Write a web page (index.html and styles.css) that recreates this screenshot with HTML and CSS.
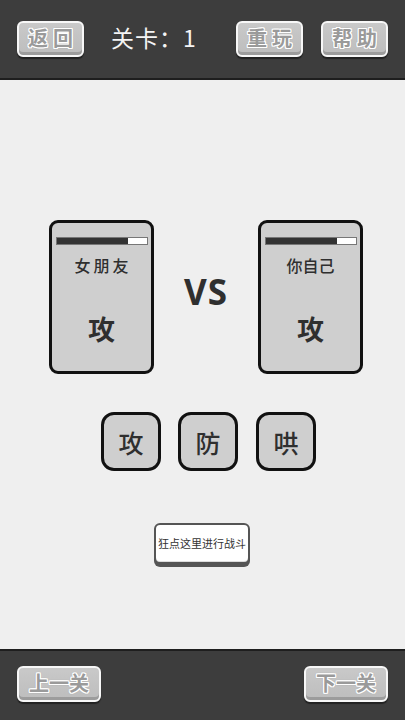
FILE: index.html
```html
<!DOCTYPE html>
<html lang="zh">
<head>
<meta charset="utf-8">
<title>关卡</title>
<link rel="stylesheet" href="styles.css">
</head>
<body>
<div class="screen">
  <header class="topbar">
    <button class="chip chip-sm">返回</button>
    <div class="level">关卡：1</div>
    <button class="chip chip-sm push">重玩</button>
    <button class="chip chip-sm">帮助</button>
  </header>

  <main class="arena">
    <div class="duel">
      <div class="card">
        <div class="hp"><div class="hp-fill" style="width:79%"></div></div>
        <div class="name spaced">女朋友</div>
        <div class="move">攻</div>
      </div>
      <div class="vs">VS</div>
      <div class="card">
        <div class="hp"><div class="hp-fill" style="width:79%"></div></div>
        <div class="name">你自己</div>
        <div class="move">攻</div>
      </div>
    </div>

    <div class="actions">
      <button class="act">攻</button>
      <button class="act">防</button>
      <button class="act">哄</button>
    </div>

    <div class="fight-wrap">
      <button class="fight">狂点这里进行战斗</button>
    </div>
  </main>

  <footer class="bottombar">
    <button class="chip chip-lg">上一关</button>
    <button class="chip chip-lg">下一关</button>
  </footer>
</div>
</body>
</html>
```
FILE: styles.css
```css
* { box-sizing: border-box; }

html, body {
  margin: 0;
  padding: 0;
  background: #efefef;
  font-family: "Noto Sans CJK SC", "Noto Sans", sans-serif;
}

.screen {
  width: 405px;
  height: 720px;
  display: flex;
  flex-direction: column;
}

/* dark bars */
.topbar {
  height: 80px;
  background: #3d3d3d;
  border-bottom: 2px solid #1e1e1e;
  display: flex;
  align-items: flex-start;
  padding: 21px 17px 0 17px;
}

.bottombar {
  height: 71px;
  background: #3d3d3d;
  border-top: 2px solid #1e1e1e;
  display: flex;
  justify-content: space-between;
  align-items: flex-start;
  padding: 15px 17px 0 17px;
}

.level {
  color: #f4f4f4;
  font-size: 23px;
  line-height: 32px;
  margin-left: 27px;
  letter-spacing: 1px;
  font-weight: 400;
}

.push { margin-left: auto; margin-right: 18px; }

/* grey pill buttons with outlined lettering */
.chip {
  height: 36px;
  border: 2px solid #f7f7f7;
  border-radius: 6px;
  background: linear-gradient(#c9c9c9, #bdbdbd);
  box-shadow: inset 0 -3px 0 #9c9c9c, 0 2px 1px rgba(0, 0, 0, 0.45);
  padding: 0 0 3px 0;
  font-family: "Noto Sans CJK SC", sans-serif;
  font-weight: 700;
  color: #9a9a9a;
  text-shadow:
    -1px -1px 0 #fff, 1px -1px 0 #fff, -1px 1px 0 #fff, 1px 1px 0 #fff,
    0 -1px 0 #fff, 0 1px 0 #fff, -1px 0 0 #fff, 1px 0 0 #fff,
    0 0 2px #555;
  cursor: pointer;
}

.chip-sm {
  width: 67px;
  font-size: 20px;
  letter-spacing: 5px;
  text-indent: 5px;
}

.chip-lg {
  width: 84px;
  font-size: 20px;
  letter-spacing: 0;
}

/* play area */
.arena {
  flex: 1;
  display: flex;
  flex-direction: column;
}

.duel {
  margin-top: 140px;
  display: flex;
  align-items: flex-start;
  padding-left: 49px;
}

.card {
  width: 105px;
  height: 154px;
  border: 3px solid #111;
  border-radius: 9px;
  background: #cfcfcf;
  display: flex;
  flex-direction: column;
  align-items: center;
  padding: 14px 3px 0 3px;
}

.hp {
  width: 92px;
  height: 8px;
  background: #fff;
  border: 1px solid #777;
}

.hp-fill {
  height: 100%;
  background: #333;
}

.name {
  margin-top: 9px;
  font-size: 16px;
  line-height: 22px;
  color: #2f2f2f;
  font-weight: 500;
}

.spaced { letter-spacing: 3px; text-indent: 3px; }

.move {
  margin-top: 33px;
  font-size: 27px;
  line-height: 40px;
  color: #2f2f2f;
  font-weight: 700;
}

.vs {
  width: 104px;
  text-align: center;
  margin-top: 50px;
  font-family: "Noto Sans", "Open Sans", sans-serif;
  font-weight: 700;
  font-size: 35px;
  line-height: 44px;
  color: #2f2f2f;
  letter-spacing: 1px;
}

.actions {
  margin-top: 38px;
  display: flex;
  padding-left: 101px;
  gap: 17px;
}

.act {
  width: 60px;
  height: 59px;
  border: 3px solid #111;
  border-radius: 13px;
  background: #cfcfcf;
  font-family: "Noto Sans CJK SC", sans-serif;
  font-size: 25px;
  font-weight: 500;
  color: #2f2f2f;
  padding: 0;
  cursor: pointer;
}

.act + .act + .act { margin-left: 1px; }

.fight-wrap {
  margin-top: 52px;
  padding-left: 154px;
}

.fight {
  width: 96px;
  height: 41px;
  border: 2px solid #555;
  border-radius: 6px;
  background: #fff;
  box-shadow: inset 0 -1px 0 #ddd, 0 3px 0 #555;
  font-family: "Noto Sans CJK SC", sans-serif;
  font-size: 11px;
  color: #333;
  padding: 0 0 2px 0;
  white-space: nowrap;
  cursor: pointer;
}
```
